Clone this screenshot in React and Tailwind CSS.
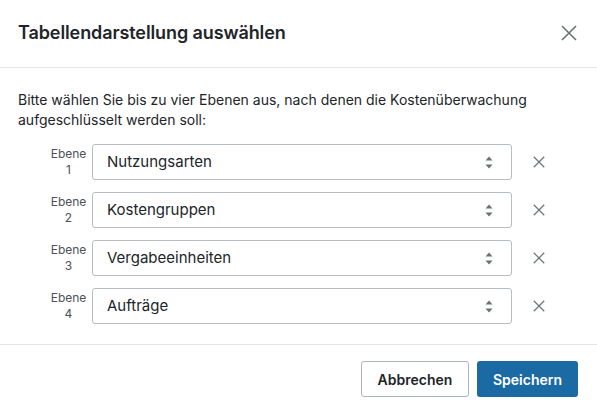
import React from "react";

const font = { fontFamily: "Inter, 'Noto Sans', sans-serif" };

function XIcon({ size = 12, stroke = 1.5, className = "" }) {
  return (
    <svg width={size} height={size} viewBox="0 0 16 16" className={className} fill="none">
      <path d="M1 1L15 15M15 1L1 15" stroke="currentColor" strokeWidth={stroke} strokeLinecap="butt" />
    </svg>
  );
}

function UpDown() {
  return (
    <svg width="8" height="13" viewBox="0 0 8 13" className="text-[#6b7177]">
      <path d="M4 0.5L7.5 4.5H0.5Z" fill="currentColor" />
      <path d="M4 12.5L7.5 8.5H0.5Z" fill="currentColor" />
    </svg>
  );
}

const rows = [
  ["1", "Nutzungsarten"],
  ["2", "Kostengruppen"],
  ["3", "Vergabeeinheiten"],
  ["4", "Aufträge"],
];

export default function App() {
  return (
    <div style={font} className="w-[597px] h-[413px] bg-white text-[#212529] flex flex-col">
      <div className="h-[68px] border-b border-[#e3e5e8] flex items-center justify-between pl-[18px] pr-[20px] shrink-0">
        <h1 className="text-[18px] font-semibold leading-7 tracking-[-0.1px] pb-[2px]">Tabellendarstellung auswählen</h1>
        <XIcon size={16} stroke={1.6} className="text-[#6b7177] mb-[2px]" />
      </div>
      <div className="pt-[22px] pb-[20px] px-[18px] border-b border-[#e3e5e8]">
        <p className="text-[14px] leading-5 mb-[14px]">
          Bitte wählen Sie bis zu vier Ebenen aus, nach denen die Kostenüberwachung aufgeschlüsselt werden soll:
        </p>
        <div className="flex flex-col gap-[12px]">
          {rows.map(([n, label]) => (
            <div key={n} className="flex items-center">
              <div className="ml-[30px] w-[41px] text-center text-[12px] leading-4 text-[#4a5159]">
                <div>Ebene</div>
                <div>{n}</div>
              </div>
              <div className="ml-[3px] w-[420px] h-[36px] border border-[#b6bcc2] rounded-[3px] flex items-center justify-between pl-[14px] pr-[18px]">
                <span className="text-[15px]">{label}</span>
                <UpDown />
              </div>
              <XIcon size={12} stroke={1.6} className="ml-[21px] text-[#6b7177]" />
            </div>
          ))}
        </div>
      </div>
      <div className="flex justify-end gap-[8px] pt-[16px] pr-[19px]">
        <button className="h-[36px] w-[108px] border border-[#adb3ba] rounded-[3px] text-[14px] font-semibold text-[#212529] bg-white">
          Abbrechen
        </button>
        <button className="h-[36px] w-[101px] rounded-[3px] text-[14px] font-semibold text-white bg-[#1b6aa3]">
          Speichern
        </button>
      </div>
    </div>
  );
}
